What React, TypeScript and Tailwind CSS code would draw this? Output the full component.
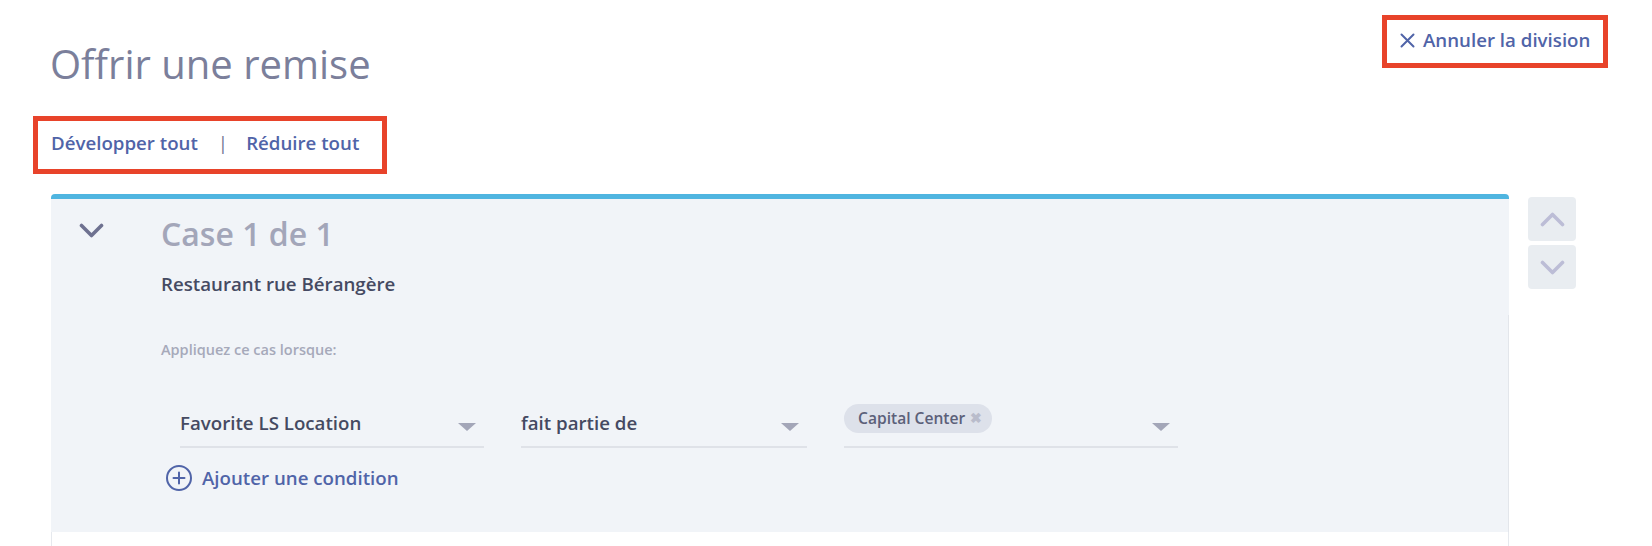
import React from "react";

const LINK = "#5064a8";

function Chevron({ dir, color, className }: { dir: "up" | "down"; color: string; className?: string }) {
  return (
    <svg viewBox="0 0 25 15" className={className} fill="none">
      <path
        d={dir === "down" ? "M2.5 2.5 L12.5 12.5 L22.5 2.5" : "M2.5 12.5 L12.5 2.5 L22.5 12.5"}
        stroke={color}
        strokeWidth={3.6}
        strokeLinecap="round"
        strokeLinejoin="round"
      />
    </svg>
  );
}

function Caret() {
  return (
    <svg viewBox="0 0 18 8" className="w-[18px] h-[8px] mt-[7px] shrink-0">
      <path d="M0 0 L18 0 L9 8 Z" fill="#a3a6b8" />
    </svg>
  );
}

function Dropdown({ width, children }: { width: string; children: React.ReactNode }) {
  return (
    <div className={`${width} border-b-2 border-[#dfe2e8] pb-[11px]`}>
      <div className="flex items-center justify-between h-[24px] pr-[8px]">{children}</div>
    </div>
  );
}

export default function App() {
  return (
    <div className="w-[1652px] h-[546px] bg-white overflow-hidden font-['Open_Sans',sans-serif]">
      {/* Top area */}
      <div className="flex justify-between pl-[33px] pr-[44px]">
        <div className="pt-[40px]">
          <h1 className="ml-[17px] text-[40px] leading-[48px] font-normal text-[#7b7f9b]">Offrir une remise</h1>
          <div className="mt-[28px] w-[354px] h-[58px] border-[5px] border-[#e8432a] pl-[13px] pt-[10px] flex items-start text-[18.7px] leading-[24px] font-semibold text-[#5064a8]">
            <span>Développer tout</span>
            <span className="ml-[20px] font-normal text-[#6f7492]">|</span>
            <span className="ml-[18px]">Réduire tout</span>
          </div>
        </div>
        <div className="mt-[15px] w-[226px] h-[53px] border-[5px] border-[#e8432a] pl-[13px] pt-[8px] flex items-start gap-[8px] text-[18.7px] leading-[24px] font-semibold text-[#5064a8]">
          <svg viewBox="0 0 15 15" className="w-[15px] h-[15px] mt-[5px] shrink-0">
            <path d="M1.5 1.5 L13.5 13.5 M13.5 1.5 L1.5 13.5" stroke={LINK} strokeWidth={2} strokeLinecap="round" />
          </svg>
          <span className="whitespace-nowrap">Annuler la division</span>
        </div>
      </div>

      {/* Card row */}
      <div className="flex items-start gap-[19px] ml-[51px] mt-[20px]">
        <div className="w-[1458px] rounded-t-[4px] border-t-[5px] border-[#4fb5e0]">
          {/* header */}
          <div className="flex bg-[#f1f4f8] pt-[15px] pb-[19px]">
            <div className="w-[110px] pl-[28px] pt-[9px] shrink-0">
              <Chevron dir="down" color="#6e7190" className="w-[25px] h-[15px]" />
            </div>
            <div className="flex flex-col">
              <div className="text-[32px] leading-[40px] font-semibold text-[#a3a6b9]">Case 1 de 1</div>
              <div className="mt-[18px] text-[18.7px] leading-[24px] font-semibold text-[#454a62]">Restaurant rue Bérangère</div>
            </div>
          </div>
          {/* body */}
          <div className="bg-[#f1f4f8] border-r border-[#e3e6eb] pl-[110px] pt-[25px] pb-[41px]">
            <div className="text-[14.5px] leading-[20px] font-semibold text-[#a6a9ba]">Appliquez ce cas lorsque:</div>
            <div className="flex gap-[37px] ml-[19px] mt-[51px]">
              <Dropdown width="w-[304px]">
                <span className="text-[18.7px] leading-[24px] font-semibold text-[#454a62]">Favorite LS Location</span>
                <Caret />
              </Dropdown>
              <Dropdown width="w-[286px]">
                <span className="text-[18.7px] leading-[24px] font-semibold text-[#454a62]">fait partie de</span>
                <Caret />
              </Dropdown>
              <Dropdown width="w-[334px]">
                <span className="-mt-[9px] h-[29px] rounded-full bg-[#dde1ea] pl-[14px] pr-[10px] flex items-center gap-[5px] text-[15.6px] font-semibold text-[#5b6079]">
                  Capital Center
                  <span className="text-[14px] font-bold text-[#b9bccb] -mt-[3px]">✖</span>
                </span>
                <Caret />
              </Dropdown>
            </div>
            <div className="flex items-center gap-[10px] ml-[5px] mt-[17px] h-[26px]">
              <svg viewBox="0 0 26 26" className="w-[26px] h-[26px] shrink-0">
                <circle cx="13" cy="13" r="12" fill="none" stroke={LINK} strokeWidth={2} />
                <path d="M13 7.5 V18.5 M7.5 13 H18.5" stroke={LINK} strokeWidth={2} strokeLinecap="round" />
              </svg>
              <span className="text-[18.7px] leading-[24px] font-semibold text-[#5064a8]">Ajouter une condition</span>
            </div>
          </div>
          <div className="h-[30px] bg-white border-x border-[#e6e9ee]" />
        </div>
        <div className="mt-[3px] flex flex-col gap-[4px]">
          <div className="w-[48px] h-[44px] rounded-[4px] bg-[#e9edf1] flex items-center justify-center">
            <Chevron dir="up" color="#bcbdd6" className="w-[25px] h-[15px]" />
          </div>
          <div className="w-[48px] h-[44px] rounded-[4px] bg-[#e9edf1] flex items-center justify-center">
            <Chevron dir="down" color="#bcbdd6" className="w-[25px] h-[15px]" />
          </div>
        </div>
      </div>
    </div>
  );
}
